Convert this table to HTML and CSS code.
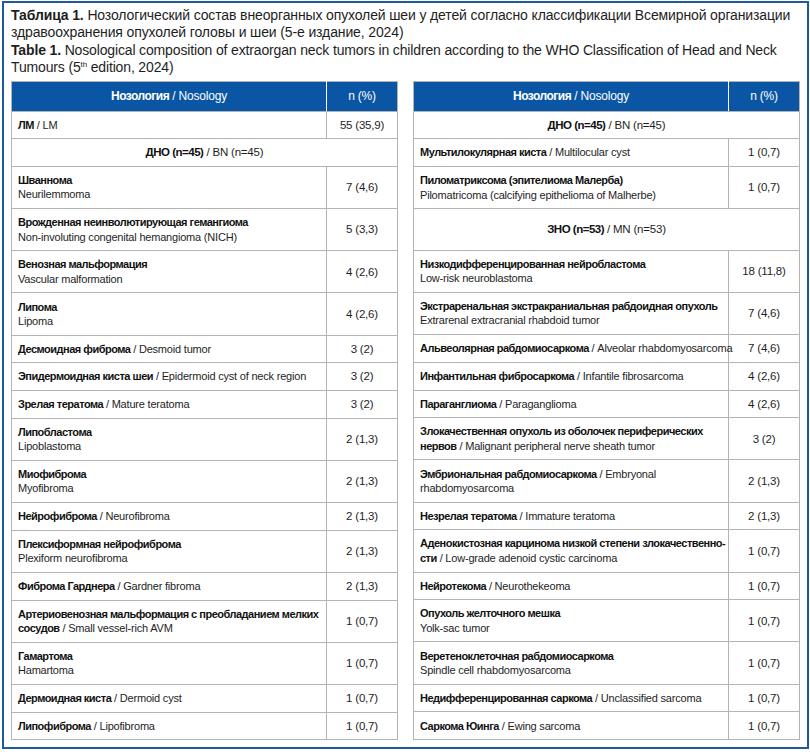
FILE: index.html
```html
<!DOCTYPE html>
<html lang="ru">
<head>
<meta charset="utf-8">
<title>Таблица 1</title>
<link rel="stylesheet" href="styles.css">
</head>
<body>
<div class="frame">
  <p class="caption ru"><b>Таблица 1.</b> Нозологический состав внеорганных опухолей шеи у детей согласно классификации Всемирной организации<br>здравоохранения опухолей головы и шеи (5-е издание, 2024)</p>
  <p class="caption en"><b>Table 1.</b> Nosological composition of extraorgan neck tumors in children according to the WHO Classification of Head and Neck<br>Tumours (5<sup>th</sup> edition, 2024)</p>
  <div class="tables">
    <table>
      <colgroup><col class="c-name"><col class="c-n"></colgroup>
      <thead><tr><th><b>Нозология</b> / Nosology</th><th>n (%)</th></tr></thead>
      <tbody>
        <tr><td><b>ЛМ</b> / LM</td><td>55 (35,9)</td></tr>
        <tr class="group"><td colspan="2"><b>ДНО (n=45)</b> / BN (n=45)</td></tr>
        <tr><td><b>Шваннома</b><br>Neurilemmoma</td><td>7 (4,6)</td></tr>
        <tr><td><b>Врожденная неинволютирующая гемангиома</b><br>Non-involuting congenital hemangioma (NICH)</td><td>5 (3,3)</td></tr>
        <tr><td><b>Венозная мальформация</b><br>Vascular malformation</td><td>4 (2,6)</td></tr>
        <tr><td><b>Липома</b><br>Lipoma</td><td>4 (2,6)</td></tr>
        <tr><td><b>Десмоидная фиброма</b> / Desmoid tumor</td><td>3 (2)</td></tr>
        <tr><td><b>Эпидермоидная киста шеи</b> / Epidermoid cyst of neck region</td><td>3 (2)</td></tr>
        <tr><td><b>Зрелая тератома</b> / Mature teratoma</td><td>3 (2)</td></tr>
        <tr><td><b>Липобластома</b><br>Lipoblastoma</td><td>2 (1,3)</td></tr>
        <tr><td><b>Миофиброма</b><br>Myofibroma</td><td>2 (1,3)</td></tr>
        <tr><td><b>Нейрофиброма</b> / Neurofibroma</td><td>2 (1,3)</td></tr>
        <tr><td><b>Плексиформная нейрофиброма</b><br>Plexiform neurofibroma</td><td>2 (1,3)</td></tr>
        <tr><td><b>Фиброма Гарднера</b> / Gardner fibroma</td><td>2 (1,3)</td></tr>
        <tr><td><b>Артериовенозная мальформация с преобладанием мелких</b><br><b>сосудов</b> / Small vessel-rich AVM</td><td>1 (0,7)</td></tr>
        <tr><td><b>Гамартома</b><br>Hamartoma</td><td>1 (0,7)</td></tr>
        <tr><td><b>Дермоидная киста</b> / Dermoid cyst</td><td>1 (0,7)</td></tr>
        <tr><td><b>Липофиброма</b> / Lipofibroma</td><td>1 (0,7)</td></tr>
      </tbody>
    </table>
    <table>
      <colgroup><col class="c-name"><col class="c-n"></colgroup>
      <thead><tr><th><b>Нозология</b> / Nosology</th><th>n (%)</th></tr></thead>
      <tbody>
        <tr class="group"><td colspan="2"><b>ДНО (n=45)</b> / BN (n=45)</td></tr>
        <tr><td><b>Мультилокулярная киста</b> / Multilocular cyst</td><td>1 (0,7)</td></tr>
        <tr><td><b>Пиломатриксома (эпителиома Малерба)</b><br>Pilomatricoma (calcifying epithelioma of Malherbe)</td><td>1 (0,7)</td></tr>
        <tr class="group tall"><td colspan="2"><b>ЗНО (n=53)</b> / MN (n=53)</td></tr>
        <tr><td><b>Низкодифференцированная нейробластома</b><br>Low-risk neuroblastoma</td><td>18 (11,8)</td></tr>
        <tr><td><b>Экстраренальная экстракраниальная рабдоидная опухоль</b><br>Extrarenal extracranial rhabdoid tumor</td><td>7 (4,6)</td></tr>
        <tr><td><b>Альвеолярная рабдомиосаркома</b> / Alveolar rhabdomyosarcoma</td><td>7 (4,6)</td></tr>
        <tr><td><b>Инфантильная фибросаркома</b> / Infantile fibrosarcoma</td><td>4 (2,6)</td></tr>
        <tr><td><b>Параганглиома</b> / Paraganglioma</td><td>4 (2,6)</td></tr>
        <tr><td><b>Злокачественная опухоль из оболочек периферических</b><br><b>нервов</b> / Malignant peripheral nerve sheath tumor</td><td>3 (2)</td></tr>
        <tr><td><b>Эмбриональная рабдомиосаркома</b> / Embryonal<br>rhabdomyosarcoma</td><td>2 (1,3)</td></tr>
        <tr><td><b>Незрелая тератома</b> / Immature teratoma</td><td>2 (1,3)</td></tr>
        <tr><td><b>Аденокистозная карцинома низкой степени злокачественно-</b><br><b>сти</b> / Low-grade adenoid cystic carcinoma</td><td>1 (0,7)</td></tr>
        <tr><td><b>Нейротекома</b> / Neurothekeoma</td><td>1 (0,7)</td></tr>
        <tr><td><b>Опухоль желточного мешка</b><br>Yolk-sac tumor</td><td>1 (0,7)</td></tr>
        <tr><td><b>Веретеноклеточная рабдомиосаркома</b><br>Spindle cell rhabdomyosarcoma</td><td>1 (0,7)</td></tr>
        <tr><td><b>Недифференцированная саркома</b> / Unclassified sarcoma</td><td>1 (0,7)</td></tr>
        <tr><td><b>Саркома Юинга</b> / Ewing sarcoma</td><td>1 (0,7)</td></tr>
      </tbody>
    </table>
  </div>
</div>
</body>
</html>
```

FILE: styles.css
```css
html, body {
  margin: 0;
  padding: 0;
  background: #ffffff;
}

.frame {
  margin: 1px 0 0 2px;
  width: 807px;
  height: 748px;
  box-sizing: border-box;
  border: 2px solid #1f5b9c;
  padding: 4px 7px 0 7px;
  font-family: "Liberation Sans", Arial, sans-serif;
  color: #1e1e1e;
}

.caption {
  margin: 0 0 1px 0;
  font-size: 14px;
  line-height: 17px;
  white-space: nowrap;
}

.caption.ru {
  letter-spacing: -0.13px;
}

.caption.en {
  letter-spacing: -0.15px;
}

.caption sup {
  font-size: 8px;
  line-height: 0;
  vertical-align: 5px;
}

.tables {
  display: flex;
  gap: 15px;
  margin-top: 5px;
}

table {
  width: 388px;
  border-collapse: collapse;
  table-layout: fixed;
  font-family: "Liberation Sans", Arial, sans-serif;
  font-size: 11px;
  line-height: 14.5px;
  letter-spacing: -0.2px;
  color: #1e1e1e;
}

table b {
  font-weight: bold;
  letter-spacing: -0.5px;
  color: #111111;
}

.c-n {
  width: 71px;
}

th {
  background: #0a56a5;
  color: #ffffff;
  font-weight: normal;
  height: 28.5px;
  padding: 0 6px;
  border: 1px solid #b3b3b3;
  border-right-color: #ffffff;
  text-align: center;
  font-size: 12px;
  letter-spacing: -0.2px;
}

th:last-child {
  border-right-color: #b3b3b3;
}

th b {
  color: #ffffff;
}

td {
  border: 1px solid #b3b3b3;
  padding: 6.1px 6px;
  vertical-align: middle;
  white-space: nowrap;
}

td:last-child {
  text-align: center;
  font-size: 11.5px;
}

.group td {
  text-align: center;
}

.group.tall td {
  padding-top: 13px;
  padding-bottom: 13px;
}
```
